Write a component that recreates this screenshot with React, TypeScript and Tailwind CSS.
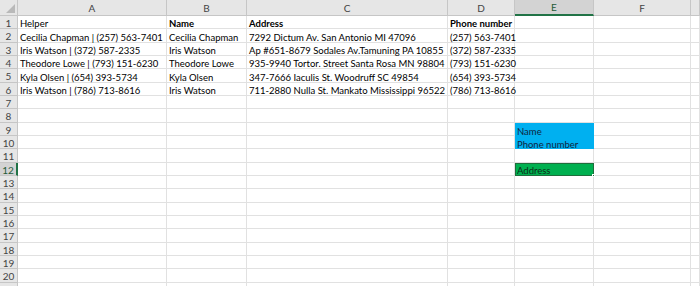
import React from "react";

const cols = ["A", "B", "C", "D", "E", "F", ""];

// rows 1-6 hold the data, everything else is empty
const data: string[][] = [
  ["Helper", "Name", "Address", "Phone number"],
  ["Cecilia Chapman | (257) 563-7401", "Cecilia Chapman", "7292 Dictum Av. San Antonio MI 47096", "(257) 563-7401"],
  ["Iris Watson | (372) 587-2335", "Iris Watson", "Ap #651-8679 Sodales Av.Tamuning PA 10855", "(372) 587-2335"],
  ["Theodore Lowe | (793) 151-6230", "Theodore Lowe", "935-9940 Tortor. Street Santa Rosa MN 98804", "(793) 151-6230"],
  ["Kyla Olsen | (654) 393-5734", "Kyla Olsen", "347-7666 Iaculis St. Woodruff SC 49854", "(654) 393-5734"],
  ["Iris Watson | (786) 713-8616", "Iris Watson", "711-2880 Nulla St. Mankato Mississippi 96522", "(786) 713-8616"],
];

function Cell({ row, col }: { row: number; col: number }) {
  let text = "";
  if (row <= 6 && col < 4) text = data[row - 1][col];
  const bold = row === 1 && col > 0;

  if (col === 4 && (row === 9 || row === 10)) {
    return (
      <div className="bg-[#00b0f0] border-r border-[#00b0f0] px-[2px] flex items-end text-[#10243e] whitespace-nowrap">
        {row === 9 ? "Name" : "Phone number"}
      </div>
    );
  }
  if (col === 4 && row === 12) {
    return (
      <div className="relative bg-[#00b050] border border-[#1e6e3c] px-[1px] flex items-end text-[#0d2b17] whitespace-nowrap">
        Address
        <span className="absolute -right-[2px] -bottom-[2px] w-[3px] h-[3px] bg-[#1e6e3c] border border-white" />
      </div>
    );
  }

  return (
    <div
      className={`border-r border-b border-[#e1e1e1] px-[2px] flex items-end whitespace-nowrap overflow-visible text-black ${bold ? "font-bold" : ""}`}
    >
      {text}
    </div>
  );
}

export default function App() {
  const rows = Array.from({ length: 21 }, (_, i) => i + 1);

  return (
    <div className="w-[700px] h-[286px] overflow-hidden bg-white font-['Lato',sans-serif] text-[9.5px] leading-none">
      <div className="grid grid-cols-[18px_149px_80px_201px_67px_79px_97px_1fr] grid-rows-[16px_13px_14px_13px_13px_14px_13px_13px_14px_13px_13px_14px_13px_13px_14px_13px_13px_14px_13px_13px_14px_13px]">
        {/* corner */}
        <div className="relative bg-[#e6e6e6] border-r border-b border-[#c6c6c6]">
          <span className="absolute right-[2px] bottom-[2px] w-0 h-0 border-l-[9px] border-l-transparent border-b-[9px] border-b-[#b9b9b9]" />
        </div>
        {cols.map((c, i) =>
          c === "E" ? (
            <div key={i} className="bg-[#d3d3d3] border-r border-[#c6c6c6] border-b-2 border-b-[#217346] flex items-center justify-center text-[#1f5b38] text-[10px]">
              {c}
            </div>
          ) : (
            <div key={i} className="bg-[#e6e6e6] border-r border-b border-[#c6c6c6] flex items-center justify-center text-[#444] text-[10px]">
              {c}
            </div>
          )
        )}

        {rows.map((r) => (
          <React.Fragment key={r}>
            {r === 12 ? (
              <div className="bg-[#d3d3d3] border-r-2 border-r-[#217346] border-b border-[#c6c6c6] flex items-center justify-center text-[#1f5b38] text-[10px] pt-[1px]">
                {r}
              </div>
            ) : (
              <div className="bg-[#e6e6e6] border-r border-b border-[#c6c6c6] flex items-center justify-center text-[#444] text-[10px] pt-[1px]">
                {r}
              </div>
            )}
            {cols.map((_, ci) => (
              <Cell key={ci} row={r} col={ci} />
            ))}
          </React.Fragment>
        ))}
      </div>
    </div>
  );
}
